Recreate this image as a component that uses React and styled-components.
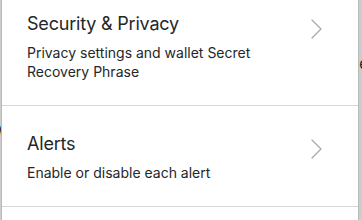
import React from "react";
import styled, { createGlobalStyle } from "styled-components";

const settings = [
  {
    title: "Security & Privacy",
    description: "Privacy settings and wallet Secret Recovery Phrase",
  },
  {
    title: "Alerts",
    description: "Enable or disable each alert",
  },
  {
    title: "Networks",
    description: "Add and edit custom RPC networks",
  },
];

// bits of the page behind the dialog that peek out at the edges
const backdropRows = [
  { left: "", right: "" },
  { left: "", right: "e" },
  { left: "", right: "" },
  { left: "", right: "" },
  { left: "", right: "t" },
  { left: "W", right: "r" },
];

const Chevron = () => (
  <svg width="11" height="20" viewBox="0 0 11 20" fill="none">
    <polyline
      points="1,1 10,10 1,19"
      stroke="#a2a7ad"
      strokeWidth="1.2"
      strokeLinecap="round"
      strokeLinejoin="round"
    />
  </svg>
);

const App = () => {
  return (
    <>
      <GlobalStyle />
      <SScreen>
        <SBackdrop>
          {backdropRows.map((row, i) => (
            <SBackdropRow key={i}>
              <span>{row.left}</span>
              <span>{row.right}</span>
            </SBackdropRow>
          ))}
        </SBackdrop>
        <SPanel>
          <SList>
            {settings.map((item) => (
              <SItem key={item.title}>
                <STextCol>
                  <STitle>{item.title}</STitle>
                  <SDesc>{item.description}</SDesc>
                </STextCol>
                <SChevronBox>
                  <Chevron />
                </SChevronBox>
              </SItem>
            ))}
          </SList>
        </SPanel>
      </SScreen>
    </>
  );
};

const GlobalStyle = createGlobalStyle`
  html, body {
    margin: 0;
    padding: 0;
    background: #cfcfcf;
    font-family: Inter, "Noto Sans", sans-serif;
  }
`;

const SScreen = styled.div`
  position: relative;
  width: 362px;
  height: 220px;
  overflow: hidden;
  background: #cdcdcd;
`;

const SBackdrop = styled.div`
  display: flex;
  flex-direction: column;
  padding-top: 38px;
`;

const SBackdropRow = styled.div`
  display: flex;
  justify-content: space-between;
  height: 17px;
  font-size: 15px;
  line-height: 17px;
  color: #1a1d26;
  margin: 0 -6px 0 -8px;
`;

const SPanel = styled.div`
  position: absolute;
  top: 0;
  bottom: 0;
  left: 1px;
  width: 356px;
  background: #ffffff;
  border-left: 1px solid #b9b9b9;
  border-right: 1px solid #b9b9b9;
  overflow: hidden;
`;

const SList = styled.div`
  display: flex;
  flex-direction: column;
  margin-top: -14px;
`;

const SItem = styled.div`
  display: flex;
  justify-content: space-between;
  align-items: flex-start;
  padding: 24px 36px 24px 25px;
  border-bottom: 1px solid #d6d9dc;
`;

const STextCol = styled.div`
  display: flex;
  flex-direction: column;
  max-width: 250px;
`;

const STitle = styled.div`
  font-size: 18px;
  line-height: 28px;
  letter-spacing: -0.2px;
  color: #24272a;
  font-weight: 400;
`;

const SDesc = styled.div`
  margin-top: 5px;
  font-size: 14px;
  line-height: 19px;
  color: #24272a;
`;

const SChevronBox = styled.div`
  display: flex;
  margin-top: 9px;
`;

export default App;
